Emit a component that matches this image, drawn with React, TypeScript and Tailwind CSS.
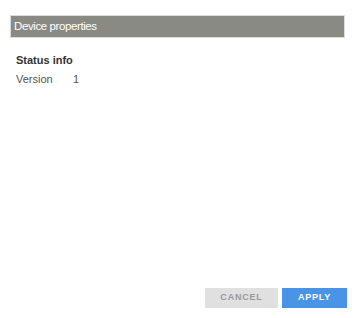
export default function App() {
  return (
    <div className="w-[356px] h-[318px] bg-white flex flex-col" style={{ fontFamily: '"Liberation Sans", Arial, sans-serif' }}>
      <div className="mt-[15px] mx-[10px] w-[335px] h-[23px] bg-[#8a8a85] border border-[#dcdcdc] flex items-center pl-[3px]">
        <span className="text-white text-[11.5px] tracking-[-0.4px]">Device properties</span>
      </div>
      <div className="pl-[16px] pt-[15px] flex flex-col">
        <div className="text-[11px] font-bold text-[#333] leading-[14px]">Status info</div>
        <div className="flex text-[11px] text-[#555] leading-[14px] mt-[5px]">
          <span className="w-[57px]">Version</span>
          <span>1</span>
        </div>
      </div>
      <div className="flex-1" />
      <div className="flex justify-end gap-[4px] pr-[9px] mb-[10px]">
        <button className="w-[73px] h-[20px] bg-[#e0e0e0] text-[#999] text-[9px] font-bold tracking-[0.8px]">CANCEL</button>
        <button className="w-[65px] h-[20px] bg-[#4a94e6] text-white text-[9px] font-bold tracking-[0.8px]">APPLY</button>
      </div>
    </div>
  );
}
